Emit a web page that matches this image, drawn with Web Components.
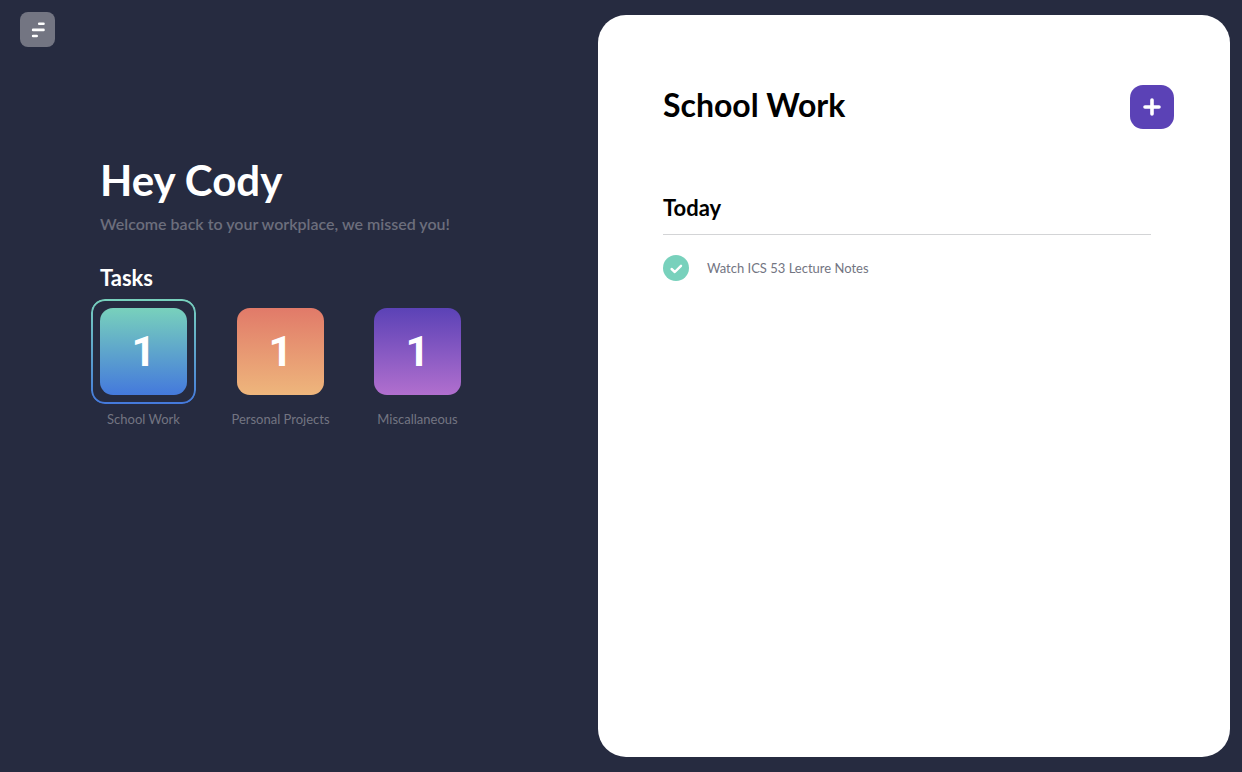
<!DOCTYPE html>
<html lang="en">
<head>
<meta charset="utf-8">
<meta name="viewport" content="width=device-width, initial-scale=1">
<title>Workplace</title>
<style>
  html { background: #262b40; }
  body { margin: 0; min-height: 100vh; display: grid; font-family: Lato, "Noto Sans", sans-serif; color: #fff; }
</style>
</head>
<body>
<task-app>
  <menu-button slot="menu"></menu-button>
  <welcome-panel slot="welcome" name="Cody">
    <task-group label="School Work" count="1" from="#78d1bc" to="#4479dc" selected></task-group>
    <task-group label="Personal Projects" count="1" from="#e17a69" to="#eeb67c"></task-group>
    <task-group label="Miscallaneous" count="1" from="#5b42b6" to="#b16fce"></task-group>
  </welcome-panel>
  <task-board slot="board" heading="School Work">
    <task-section heading="Today">
      <task-item>Watch ICS 53 Lecture Notes</task-item>
    </task-section>
  </task-board>
</task-app>
<script>
  const define = (name, render) => customElements.define(name, class extends HTMLElement {
    constructor() {
      super();
      this.attachShadow({ mode: 'open' });
    }
    connectedCallback() {
      this.shadowRoot.innerHTML = render(this);
    }
  });

  define('task-app', () => `
    <style>
      :host { display: grid; grid-template-columns: 598fr 632fr; padding: 12px 12px 15px 0; box-sizing: border-box; min-height: 100vh; }
      .side { padding-left: 20px; }
      .welcome { padding: 107px 0 0 80px; }
      .board { display: grid; padding-top: 3px; }
    </style>
    <div class="side">
      <slot name="menu"></slot>
      <div class="welcome"><slot name="welcome"></slot></div>
    </div>
    <main class="board"><slot name="board"></slot></main>`);

  define('menu-button', () => `
    <style>
      :host { display: block; }
      button { display: grid; place-items: center; width: 35px; height: 35px; padding: 0; border: 0; border-radius: 8px; background: #737582; cursor: pointer; }
      svg { display: block; }
    </style>
    <button type="button" aria-label="Menu">
      <svg width="35" height="35" viewBox="0 0 35 35" fill="none" stroke="#fff" stroke-width="2.6" stroke-linecap="round">
        <path d="M19.2 11.8h4.3M13.1 17.9h10.4M13.1 24h3.6"/>
      </svg>
    </button>`);

  define('welcome-panel', el => `
    <style>
      :host { display: block; }
      h1 { margin: 0; font-size: 42px; line-height: 52px; font-weight: 700; }
      p { margin: 5px 0 0; font-size: 16px; line-height: 26px; font-weight: 600; color: #6c6e7c; }
      h2 { margin: 28px 0 0; font-size: 22px; line-height: 26px; font-weight: 700; }
      .groups { display: flex; gap: 50px; margin-top: 17px; }
    </style>
    <h1>Hey ${el.getAttribute('name')}</h1>
    <p>Welcome back to your workplace, we missed you!</p>
    <h2>Tasks</h2>
    <div class="groups"><slot></slot></div>`);

  define('task-group', el => `
    <style>
      :host { display: block; --fill: linear-gradient(${el.getAttribute('from')}, ${el.getAttribute('to')}); }
      button { display: flex; flex-direction: column; align-items: center; gap: 14px; width: 87px; padding: 0; border: 0; background: none; font: inherit; color: inherit; cursor: pointer; }
      .tile { position: relative; display: grid; place-items: center; width: 87px; height: 87px; border-radius: 13px; background: var(--fill); font-family: Roboto, sans-serif; font-size: 42px; line-height: 52px; font-weight: 700; }
      :host([selected]) .tile::after {
        content: ""; position: absolute; inset: -9px; border: 2px solid transparent; border-radius: 14px;
        background: var(--fill) border-box;
        mask: linear-gradient(#000 0 0) padding-box exclude, linear-gradient(#000 0 0) border-box;
      }
      .name { white-space: nowrap; font-size: 13px; line-height: 20px; color: #737582; }
    </style>
    <button type="button" aria-pressed="${el.hasAttribute('selected')}">
      <span class="tile">${el.getAttribute('count')}</span>
      <span class="name">${el.getAttribute('label')}</span>
    </button>`);

  define('task-board', el => `
    <style>
      :host { display: block; box-sizing: border-box; padding: 70px 56px 40px 65px; border-radius: 28px; background: #fff; color: #000; }
      header { display: flex; align-items: flex-start; justify-content: space-between; }
      h1 { margin: 0; font-size: 32px; line-height: 40px; font-weight: 700; }
      button { display: grid; place-items: center; width: 44px; height: 44px; padding: 0; border: 0; border-radius: 13px; background: #5b42b6; cursor: pointer; }
      .sections { margin: 66px 23px 0 0; }
    </style>
    <header>
      <h1>${el.getAttribute('heading')}</h1>
      <button type="button" aria-label="Add task">
        <svg width="20" height="20" viewBox="0 0 20 20" fill="none" stroke="#fff" stroke-width="3.6" stroke-linecap="round"><path d="M10 3v14M3 10h14"/></svg>
      </button>
    </header>
    <div class="sections"><slot></slot></div>`);

  define('task-section', el => `
    <style>
      :host { display: block; }
      h2 { margin: 0; padding-bottom: 13px; border-bottom: 1px solid #d3d4d6; font-size: 22px; line-height: 26px; font-weight: 700; }
      .items { display: grid; gap: 16px; padding-top: 20px; }
    </style>
    <h2>${el.getAttribute('heading')}</h2>
    <div class="items"><slot></slot></div>`);

  define('task-item', () => `
    <style>
      :host { display: block; }
      label { display: flex; align-items: center; gap: 18px; font-size: 13px; line-height: 20px; color: #737582; cursor: pointer; }
      .check { display: grid; width: 26px; height: 26px; }
      input, svg { grid-area: 1 / 1; }
      input { appearance: none; margin: 0; width: 26px; height: 26px; border-radius: 50%; background: #78d1bc; }
      svg { z-index: 1; pointer-events: none; }
      input:not(:checked) + svg { display: none; }
    </style>
    <label>
      <span class="check">
        <input type="checkbox" checked>
        <svg width="26" height="26" viewBox="0 0 26 26" fill="none" stroke="#fff" stroke-width="2.4" stroke-linecap="round" stroke-linejoin="round"><path d="M8.6 14l3.2 3 6.2-6.2"/></svg>
      </span>
      <span><slot></slot></span>
    </label>`);
</script>
</body>
</html>
